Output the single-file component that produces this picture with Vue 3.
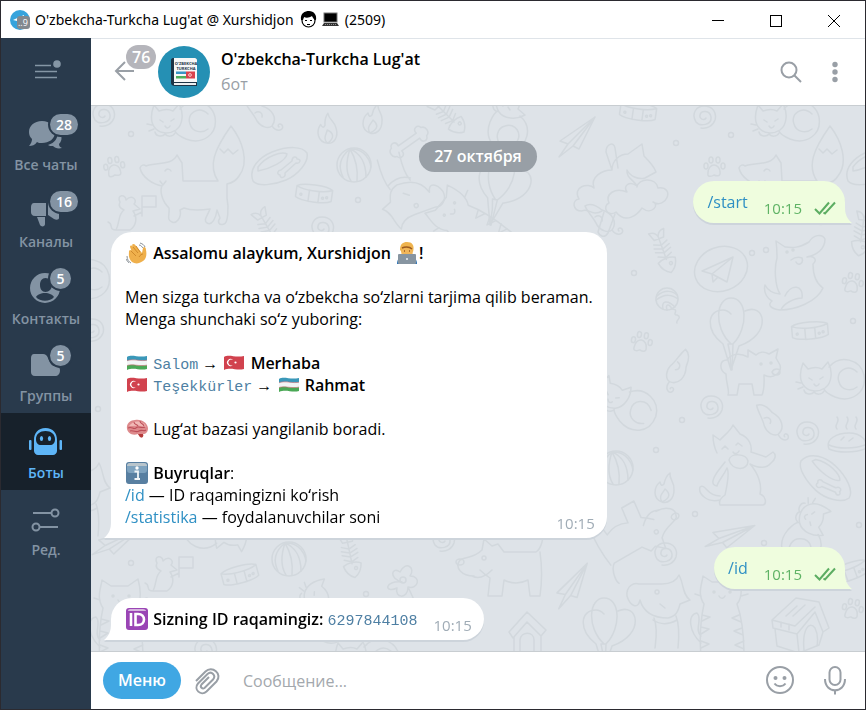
<template>
  <div class="window">
    <svg class="sprite" aria-hidden="true">
      <defs>
        <symbol id="e-wave" viewBox="0 0 22 22">
          <path d="M6 20 C2 16 3 12 3 9 C4 7 6 8 6 10 L4 5 C4 3 6 3 7 5 L6 3 C7 1 9 2 10 4 L16 11 L17 6 C18 4 20 5 20 8 C21 13 20 17 17 19 C13 22 9 22 6 20Z" fill="#efb04c" />
          <path d="M7 5 L12 11 M5 9 L10 14 M10 4 L14 10 M13 15 C14 13 16 12 17 12" fill="none" stroke="#cf8a2c" stroke-width="1" />
          <path d="M1 14 C1 18 3 20 5 21 M14 1 C17 2 18 3 19 5 M0 17 C1 19 2 20 3 21 M13 3 C15 3 16 5 17 6" fill="none" stroke="#8a9197" stroke-width="1" />
        </symbol>
        <symbol id="e-coder" viewBox="0 0 22 22">
          <path d="M1 22 C1 17 4 15 6 14 H16 C19 15 21 18 21 22Z" fill="#2b72b4" />
          <ellipse cx="11" cy="9" rx="6" ry="7" fill="#f0b65a" />
          <path d="M4 8 C4 2 7 0 11 0 C16 0 19 3 17 10 L15 7 C12 7 9 6 8 5 C7 6 6 7 6 10Z" fill="#efb44f" />
          <path d="M6 6 C8 5 13 4 16 7 M8 9 H9 M13 9 H14" fill="none" stroke="#9b5a20" stroke-width="1.4" />
          <rect x="2" y="12" width="18" height="10" rx="1" fill="#8795a1" />
          <circle cx="11" cy="17" r="1" fill="#eef2f5" />
        </symbol>
        <symbol id="e-uz" viewBox="0 0 22 22">
          <clipPath id="flag"><path d="M1 5 C6 2 12 6 21 4 V17 C14 19 8 15 1 18Z" /></clipPath>
          <g clip-path="url(#flag)">
            <rect width="22" height="22" fill="#f2f5f5" />
            <path d="M0 4 C6 1 12 5 22 3 V8 C14 10 8 6 0 9Z" fill="#3a98b9" />
            <path d="M0 14 C6 11 12 15 22 13 V20 H0Z" fill="#4aa855" />
            <path d="M0 9 C8 6 14 10 22 8 M0 14 C6 11 12 15 22 13" fill="none" stroke="#cf6a70" stroke-width=".6" />
          </g>
        </symbol>
        <symbol id="e-tr" viewBox="0 0 22 22">
          <path d="M1 5 C6 2 12 6 21 4 V17 C14 19 8 15 1 18Z" fill="#d1424e" />
          <path d="M10 8 A3.5 3.5 0 1 0 10 13 A3 3 0 1 1 10 8Z" fill="#fff" />
          <circle cx="12.5" cy="10.5" r="1.1" fill="#fff" />
        </symbol>
        <symbol id="e-brain" viewBox="0 0 22 22">
          <path d="M1 11 C0 5 5 2 9 2 C15 1 21 4 22 10 C22 14 20 16 17 16 C18 19 16 20 14 19 L12 16 C6 18 2 15 1 11Z" fill="#dd8a8c" />
          <path d="M3 8 C6 4 11 2 17 5 C20 7 20 9 19 9 C14 7 8 8 3 8Z" fill="#f1b9b6" />
          <path d="M2 10 C6 8 7 12 10 10 C12 7 15 11 19 9 M4 13 C8 12 10 15 13 13 S18 14 20 12 M8 4 C8 7 11 6 12 8 M14 3 C14 6 17 5 18 8" fill="none" stroke="#bd4f59" stroke-width="1.1" />
          <path d="M12 16 H17 C18 19 16 20 14 19Z" fill="#b53b3a" />
        </symbol>
        <symbol id="e-info" viewBox="0 0 22 22">
          <rect x="0" y="0" width="22" height="22" rx="3" fill="#587fa1" />
          <rect x="1" y="1" width="20" height="10" rx="3" fill="#7fa3bf" />
          <path d="M1 4 C1 2 2 1 4 1 H18 C20 1 21 2 21 4Z" fill="#b9c5cc" />
          <circle cx="11" cy="6" r="1.7" fill="#fff" />
          <path d="M8.5 9.5 H12 V16.5 M8.5 17 H14" fill="none" stroke="#f1f5f8" stroke-width="1.8" />
        </symbol>
        <symbol id="e-id" viewBox="0 0 22 22">
          <rect width="22" height="22" rx="3" fill="#9a45b5" />
          <path d="M2 3 C2 1 4 1 5 1 H17 C19 1 20 2 20 3Z" fill="#d6b5df" />
          <path d="M5 5 V18 M9.5 6 V17 H12 C20 17 20 6 12 6Z" fill="none" stroke="#fff" stroke-width="2.6" />
        </symbol>

        <g id="d-swirl"><path d="M2 1 C0 4 -5 2 -4 -2 C-3 -7 6 -7 7 0 C8 8 -4 10 -8 5 C-13 -3 -8 -11 0 -11 C9 -11 13 -4 11 3 C9 9 3 12 -3 11" /></g>
        <g id="d-dot"><circle r="2.5" /></g>
        <g id="d-paw">
          <path d="M-6 5 C-6 0 -3 -3 0 -3 C3 -3 6 0 6 4 C7 9 2 8 0 7 C-3 9 -7 9 -6 5Z" />
          <ellipse cx="-8" cy="-2" rx="2" ry="3" /><ellipse cx="-3" cy="-8" rx="2" ry="3" />
          <ellipse cx="4" cy="-8" rx="2" ry="3" /><ellipse cx="9" cy="-2" rx="2" ry="3" />
        </g>
        <g id="d-ball">
          <circle r="17" />
          <path d="M-4 -16 C-14 -8 -16 2 -11 12 M-4 -16 C-8 -4 -8 8 -3 16 M-4 -16 C2 -6 4 6 3 16 M-4 -16 C6 -12 12 -2 12 12 M-4 -16 C6 -17 15 -10 17 2" />
        </g>
        <g id="d-fish">
          <path d="M0 -14 V10 M-8 -20 C-4 -20 -1 -18 0 -14 C1 -18 4 -20 8 -20 L5 -12 H-5Z M-7 -8 L0 -5 L7 -8 M-8 -4 L0 -1 L8 -4 M-8 0 L0 3 L8 0 M-7 5 L0 8 L7 5 M-9 11 C-4 8 4 8 9 11 C8 17 4 22 0 24 C-4 22 -8 17 -9 11Z" />
          <circle cx="3" cy="15" r="1.5" />
        </g>
        <g id="d-bone"><path d="M-11 -3 H11 C10 -9 17 -10 18 -5 C23 -4 23 4 18 5 C17 10 10 9 11 3 H-11 C-10 9 -17 10 -18 5 C-23 4 -23 -4 -18 -5 C-17 -10 -10 -9 -11 -3Z" /></g>
        <g id="d-collar">
          <path d="M-18 -6 C-12 -10 12 -10 18 -6 V5 C12 9 -12 9 -18 5Z M-18 -6 C-10 -2 10 -2 18 -6 M-5 -3 H5 V8 H-5Z" />
          <circle cx="-13" cy="2" r="1" /><circle cx="13" cy="2" r="1" /><circle cx="9" cy="3" r="1" />
        </g>
        <g id="d-plane"><path d="M18 -20 L-17 4 L-9 7 L-18 20 L-4 9 L2 12Z M18 -20 L-9 7 M18 -20 L-4 9" /></g>
        <g id="d-badge"><ellipse rx="27" ry="22" transform="rotate(-20)" /><path d="M12 -12 L-19 2 L-9 5 L6 13Z M12 -12 L-9 5 L-8 13 L-3 8" /></g>
        <g id="d-fire"><path d="M-3 14 C-13 10 -11 -1 -5 -6 C-4 -2 -3 -2 -1 -4 C0 -9 1 -12 5 -15 C4 -8 10 -6 9 2 C9 11 3 16 -3 14Z M-3 14 C-7 8 -2 5 0 1 C5 5 6 10 -3 14" /></g>
        <g id="d-bowl">
          <path d="M-27 15 C-32 2 -20 -9 -8 -14 C8 -20 22 -20 27 -13 C29 -4 18 9 6 14 C-6 19 -22 21 -27 15Z M-22 1 C-14 -10 2 -15 7 -12 C6 -5 -10 3 -22 5Z" />
          <path d="M1 4 L12 -5 C12 -10 17 -10 17 -7 C22 -7 20 -2 16 -3 L5 7 C6 12 0 13 0 9 C-4 8 -2 4 1 4Z" />
        </g>
        <g id="d-mouse"><path d="M-15 -16 C-10 -19 -3 -16 2 -12 C12 -9 18 0 12 8 C8 11 1 9 -3 3 C-6 -4 -12 -9 -15 -16Z M12 8 C17 15 25 12 22 7 C19 4 17 8 19 9 M-5 -5 C-1 -8 3 -5 2 -1" /></g>
        <g id="d-curl">
          <path d="M-22 -12 L-17 -6 C-12 -8 -7 -8 -3 -6 L3 -13 C8 -4 7 8 0 13 C-6 17 -15 17 -20 12 C-26 6 -25 -4 -22 -12Z M4 -8 C15 -21 35 -16 39 0 C42 18 26 28 10 22 C3 19 0 17 -1 14 M32 -3 C22 -12 10 -3 14 7 C16 15 26 17 32 12 M-16 3 L-13 5 M-5 4 L-2 2 M-11 9 C-9 12 -7 11 -6 9 M-21 15 C-20 20 -13 20 -11 17 C-9 20 -3 20 -1 16 M-29 7 L-24 8 M-27 14 L-22 12" />
        </g>
        <g id="d-fox"><path d="M-44 -14 C-34 -18 -18 -14 -13 -25 L-8 -17 L-7 1 H28 C18 -14 24 -30 41 -54 C52 -40 60 -18 49 -4 C46 1 42 3 37 4 V18 C39 28 38 43 34 44 C29 46 27 42 30 38 L27 30 C26 38 22 46 17 43 C13 40 17 37 20 29 C12 30 2 31 -6 28 L-10 30 C-8 38 -14 44 -18 42 C-24 40 -20 34 -21 28 C-29 20 -30 10 -28 6 C-38 4 -48 -3 -50 -12 C-49 -15 -46 -16 -44 -14Z M30 -31 L34 -27 L38 -31 L43 -26 L48 -30 M-25 -9 C-23 -12 -20 -11 -19 -9 M-30 1 L-27 5 L-24 1" /></g>
        <g id="d-dog"><path d="M-13 -35 C-12 -28 -12 -22 -12 -18 C-15 -8 -14 10 -9 18 C-19 17 -22 13 -24 9 C-26 17 -21 23 -17 25 C-22 29 -18 33 -9 34 C6 34 28 26 34 12 C28 8 24 0 24 -12 C29 -16 25 -21 18 -19 C28 -21 36 -27 36 -37 C33 -43 24 -41 20 -34 C10 -28 4 -28 -4 -29Z M2 -16 C6 -19 10 -19 13 -18 C15 -12 9 -10 7 -14 M-4 20 C2 7 15 9 13 22 M-8 34 C-6 28 5 22 13 22" /><circle cx="-2" cy="-24" r="1" /><circle cx="4" cy="-26" r="1" /></g>
        <g id="d-cat"><path d="M-23 -25 C-26 -31 -27 -37 -27 -43 L-20 -38 C-16 -43 -10 -46 -7 -53 L0 -44 C10 -40 12 -32 11 -26 L26 -21 L33 -26 C37 -23 35 -18 31 -15 C26 -9 18 -10 10 -14 C19 -4 22 8 20 16 C26 18 27 26 23 27 H-20 C-22 22 -18 19 -15 17 C-13 8 -10 -5 -13 -10 C-17 -1 -22 3 -23 8 C-30 7 -27 0 -22 -7 L-15 -16 M-20 22 C-33 25 -42 16 -40 9 C-34 5 -34 18 -20 18 M-11 -18 C-10 -25 6 -25 8 -17 C8 -7 -8 -7 -11 -18 M-18 -29 L-15 -32 L-12 -29 M-4 -33 L-2 -35 L2 -32 M-7 -26 C-5 -23 -2 -25 -1 -27" /></g>
        <g id="d-tabby"><path d="M-22 38 C-24 15 -22 0 -19 -14 C-26 -24 -21 -34 -20 -42 L-11 -36 H6 L16 -43 C20 -28 19 -20 14 -14 C19 0 21 18 21 38 M-22 25 C-34 14 -36 -4 -26 -5 C-20 0 -29 12 -22 18 M-21 -3 L-13 -1 L-21 3 M-22 9 L-14 11 L-22 16 M-22 23 L-14 26 L-22 30 M16 -3 L9 0 L18 4 M19 10 L11 13 L20 17 M21 23 L12 27 L21 31 M-28 -24 L-22 -22 M18 -22 L25 -24 M-4 -22 C-2 -18 1 -20 2 -22" /><circle cx="-9" cy="-26" r="1" /><circle cx="7" cy="-26" r="1" /></g>
        <g id="d-cloud"><path d="M-28 29 C-38 29 -38 18 -31 17 C-38 5 -22 0 -16 6 C-20 -5 -8 -12 2 -12 L-4 -30 C-4 -38 4 -41 5 -34 L8 -14 M2 -12 C2 -22 10 -28 18 -28 L32 -38 L34 -26 C39 -21 44 -16 46 -10 L35 -4 C28 -2 20 -6 17 -12 C16 -4 24 -2 27 4 C19 -2 13 4 17 10 C5 5 -5 12 -1 21 C-8 24 -3 36 6 30 C16 43 28 32 32 26 C42 34 50 22 43 20 C56 28 66 4 48 6 C46 -5 28 -4 27 5 M-8 29 C-18 35 -22 25 -28 29 M-6 30 L-12 50 M5 32 L-2 51 C-5 56 -10 55 -12 50" /></g>
        <g id="d-balloons"><path d="M-8 22 C-26 8 -24 -12 -8 -12 C-5 -12 -2 -10 0 -8 M-8 22 L0 48 M0 22 C-18 5 -15 -24 0 -24 C16 -24 18 5 2 22 M2 22 H-3 L-1 32 L0 48 L8 24 M14 -11 C34 -20 42 12 8 24 M2 22 L1 48" /></g>
        <g id="d-bear"><path d="M-17 -8 C-25 -8 -25 2 -18 6 C-18 16 -14 23 -16 27 H-7 L-5 16 H8 L10 27 H18 C21 20 20 12 20 7 C30 12 38 4 36 -3 L32 -10 L34 -19 L25 -14 C20 -17 15 -16 12 -13 L4 -18 V-11 C-5 -16 -13 -14 -17 -8Z M28 4 C30 0 36 0 36 4 C36 8 29 8 28 4" /><circle cx="17" cy="-4" r="1" /><circle cx="27" cy="-5" r="1" /></g>
        <g id="d-yarn"><circle r="11" /><path d="M-10 -3 C-2 -10 6 -8 10 -4 M-11 1 C-2 -6 6 -4 11 0 M-4 10 C-6 2 0 0 8 8 M0 11 C-2 5 2 4 5 10 M4 10 C14 10 4 16 10 16 C16 18 8 22 10 24" /></g>
        <g id="d-pie"><path d="M-18 12 C-22 2 -10 -4 2 -4 C14 -4 22 4 18 12 C8 16 -10 16 -18 12Z M-18 8 C-10 12 8 12 18 8 M-10 -8 C-14 -12 -6 -15 -10 -20 M0 -8 C-4 -12 4 -15 0 -20 M9 -8 C5 -12 13 -15 9 -20 M-6 3 L-3 0 M2 4 L6 1" /></g>
        <g id="d-house"><path d="M-29 0 L-5 -22 L18 -18 L28 8 L22 12 L14 -8 L-4 14 L-28 8Z M-29 0 L-6 6 L14 -13 M-26 9 L-24 26 L-2 33 L-4 14 M22 12 L18 25 L-2 33 M3 30 C1 10 8 0 14 8 C17 14 17 20 16 26 M-20 2 V7 M-12 4 V10 M-15 -4 L-4 -14 M-8 -4 L4 -15" /></g>
        <g id="d-booth"><path d="M-18 -2 L0 -22 L19 -4 L14 2 L0 -12 L-14 4Z M-13 3 V24 H14 V2 M-7 24 V6 C-6 -3 7 -3 7 6 V24" /></g>
        <g id="d-head"><path d="M-30 8 C-32 18 -40 14 -43 4 C-44 -6 -36 -10 -31 -8 L-8 -8 C0 -8 6 -10 9 -17 C14 -8 12 2 20 8 L10 12 C8 20 6 24 -2 26 C-14 26 -26 22 -30 8Z M-16 26 C-12 36 -14 48 -15 56 M6 24 C10 34 9 46 8 56 M-17 28 C-8 34 0 32 7 28 M-10 12 L-5 16" /><circle cx="-13" cy="0" r="2" /></g>
        <g id="d-hound"><path d="M-30 10 C-42 10 -50 2 -44 -6 C-36 -10 -30 -8 -22 -16 L-20 -27 L-12 -20 L-6 -22 L0 -14 H32 C38 -18 40 -30 38 -34 M36 -14 C38 0 38 16 36 30 H26 L24 14 C16 18 8 18 0 14 L-2 30 H-16 L-14 12 C-20 8 -22 6 -24 4 M-32 10 C-24 14 -16 8 -12 4" /><circle cx="-20" cy="-8" r="2" /><ellipse cx="-44" cy="-4" rx="4" ry="3" /></g>
        <g id="d-rat"><path d="M-10 -10 C-14 -18 -4 -18 -4 -12 C2 -18 8 -12 4 -8 L10 -3 L3 -1 C8 6 6 14 0 18 H-14 C-10 10 -12 2 -6 -2 C-10 -4 -12 -6 -10 -10Z M4 4 L12 0 M12 -16 V4 M12 -16 H26 V-5 H12 M-14 18 C-22 18 -16 12 -22 10" /></g>
        <g id="d-flower"><path d="M0 0 C-14 -4 -10 -16 -2 -10 C4 -22 14 -14 8 -6 C20 -6 16 8 6 5 C6 18 -8 16 -5 6 C-18 12 -18 -2 0 0Z M6 5 L14 22" /><circle cx="1" cy="-2" r="3" /></g>
      </defs>
    </svg>

    <header class="titlebar">
      <svg class="app-icon" viewBox="0 0 20 20" aria-hidden="true">
        <circle cx="10" cy="10" r="10" fill="#36a3dc" />
        <path d="M3 10 L14 5 V9 L7 11Z" fill="#fff" />
        <rect x="7" y="6" width="13" height="13" rx="3" fill="#82898f" />
        <text x="8" y="16" font-size="9" fill="#fff">..9</text>
      </svg>
      <h1 class="window-title">
        O'zbekcha-Turkcha Lug'at @ Xurshidjon
        <svg class="title-emoji" viewBox="0 0 17 17" aria-hidden="true">
          <circle cx="8.5" cy="9.5" r="6.5" fill="#fff" stroke="#000" stroke-width="1.2" />
          <path d="M1 9 C0 2 5 0 9 0 C14 0 17 4 16 9 C14 9 13 7 12 5 C9 7 6 7 4 6 L3 9Z" fill="#000" />
          <path d="M5 9.500 H7 M10 9.500 H12 M7 13.500 H10" stroke="#000" stroke-width="1.2" />
        </svg>
        <svg class="title-emoji" viewBox="0 0 17 17" aria-hidden="true">
          <rect x="2" y="2" width="13" height="9" fill="#000" stroke="#777" />
          <path d="M2 12 H15 L17 15 H0Z" fill="#333" />
          <path d="M3 13.500 H14" stroke="#aaa" stroke-width=".8" stroke-dasharray="1 1" />
        </svg>
        (2509)
      </h1>
      <div class="window-controls">
        <button type="button" aria-label="Свернуть"><svg viewBox="0 0 12 12"><path d="M0 5.500 H12" /></svg></button>
        <button type="button" aria-label="Развернуть"><svg viewBox="0 0 12 12"><rect x=".5" y=".5" width="11" height="11" /></svg></button>
        <button type="button" aria-label="Закрыть"><svg viewBox="0 0 12 12"><path d="M0 0 L12 12 M12 0 L0 12" /></svg></button>
      </div>
    </header>

    <div class="body">
      <nav class="sidebar">
        <button type="button" class="burger" aria-label="Меню">
          <svg viewBox="0 0 28 20">
            <path d="M3 3.500 H19 M3 9.500 H25 M3 15.500 H25" fill="none" stroke="#8596a5" stroke-width="1.6" />
            <circle cx="25" cy="2" r="3.8" fill="#8596a5" />
          </svg>
        </button>
        <button
          v-for="folder in folders"
          :key="folder.icon"
          type="button"
          class="folder"
          :class="{ active: folder.icon === activeFolder }"
          @click="activeFolder = folder.icon"
        >
          <svg class="folder-icon" viewBox="0 0 32 32" aria-hidden="true">
            <g v-if="folder.icon === 'chats'">
              <path d="M12 2 C20 2 25 7 25 13 C25 20 19 24 12 24 C10 24 8 24 7 23 C5 26 2 27 -1 27 C1 25 2 22 2 20 C0 18 -1 16 -1 13 C-1 7 4 2 12 2Z" />
              <path d="M28 12 C32 16 33 21 29 25 C29 27 30 28 32 29 C28 30 25 29 23 27 C21 27 19 27 18 26 C25 24 28 19 28 12Z" />
            </g>
            <g v-else-if="folder.icon === 'channels'">
              <path d="M4 7 H16 V20 H5 C2 20 1 18 1 16 V11 C1 9 2 7 4 7Z" />
              <path d="M7 21 H15 V28 C15 31 11 31 10 29Z" />
              <path d="M18 7 L26 2 H29 V22 C29 24 26 24 24 23 L18 19Z" />
            </g>
            <path
              v-else-if="folder.icon === 'contacts'"
              fill-rule="evenodd"
              d="M15 0 A15 15 0 1 0 15 30 A15 15 0 1 0 15 0Z M15.500 5 C19 5 22 8 22 12 C22 16 19 19 15.500 19 C12 19 10 16 10 12 C10 8 12 5 15.500 5Z M15 20 C19 20 23 22 24 24 C20 29 10 29 6 24 C7 22 11 20 15 20Z"
            />
            <path v-else-if="folder.icon === 'groups'" d="M4 4 H13 C18 4 18 10 21 14 C24 18 30 15 30 20 C30 24 28 26 25 26 H5 C2 26 1 24 1 22 V8 C1 6 2 4 4 4Z" />
            <g v-else-if="folder.icon === 'bots'">
              <path fill-rule="evenodd" d="M15.500 1 C23 1 27 6 27 13 V24 C27 26 25 28 23 28 H8 C6 28 4 26 4 24 V13 C4 6 8 1 15.500 1Z M15.500 4 C10 4 6 7 6 12 C6 16 8 18 11 18 H20 C23 18 25 16 25 12 C25 7 21 4 15.500 4Z" />
              <rect x="-1" y="13" width="2.5" height="10" rx="1" /><rect x="29.5" y="13" width="2.5" height="10" rx="1" />
              <ellipse cx="11.5" cy="11.5" rx="1.6" ry="2.6" /><ellipse cx="19.5" cy="11.5" rx="1.6" ry="2.6" />
            </g>
            <g v-else class="outline">
              <path d="M3 9 H21 M10 23 H28" />
              <circle cx="25" cy="9" r="3.5" /><circle cx="6" cy="23" r="3.5" />
            </g>
          </svg>
          <span v-if="folder.count" class="folder-badge">{{ folder.count }}</span>
          <span class="folder-label">{{ folder.label }}</span>
        </button>
      </nav>

      <main class="main">
        <header class="chat-header">
          <button type="button" class="back" aria-label="Назад">
            <svg viewBox="0 0 20 20"><path d="M19 9 H1 M10 0 L1 9 L10 18" /></svg>
            <span class="back-badge">76</span>
          </button>
          <svg class="avatar" viewBox="0 0 52 52" aria-hidden="true">
            <circle cx="26" cy="26" r="26" fill="#2590b4" />
            <path d="M15 12 H37 C38 12 39 13 39 14 V40 H17 C15 40 13 39 13 37 V14 C13 13 14 12 15 12Z" fill="#1d3446" />
            <path d="M16 12 H37 C38 12 39 13 39 14 V36 H16Z" fill="#f7f8f8" />
            <path d="M16 37 H38 V39 H16Z" fill="#eceff0" />
            <text x="28" y="19" text-anchor="middle" class="cover">O'ZBEKCHA</text>
            <text x="28" y="24" text-anchor="middle" class="cover">TURKCHA</text>
            <rect x="18" y="25.5" width="10" height="2.5" fill="#3995c4" />
            <rect x="18" y="30" width="10" height="2.5" fill="#4fae5b" />
            <rect x="28" y="25.5" width="9" height="7" fill="#d8434d" />
            <circle cx="32" cy="29" r="1.4" fill="none" stroke="#fff" stroke-width=".7" />
          </svg>
          <div class="peer">
            <h2>O'zbekcha-Turkcha Lug'at</h2>
            <p>бот</p>
          </div>
          <button type="button" class="header-btn" aria-label="Поиск">
            <svg viewBox="0 0 24 24"><circle cx="10" cy="10" r="7.5" /><path d="M15.500 15.500 L22 22" /></svg>
          </button>
          <button type="button" class="header-btn dots" aria-label="Ещё">
            <svg viewBox="0 0 24 24"><circle cx="12" cy="4.5" r="2.7" /><circle cx="12" cy="12" r="2.7" /><circle cx="12" cy="19.5" r="2.7" /></svg>
          </button>
        </header>

        <section class="chat">
          <svg class="wallpaper" viewBox="91 106 774 545" preserveAspectRatio="xMinYMin slice" aria-hidden="true">
            <use
              v-for="(d, i) in doodles"
              :key="i"
              :href="'#d-' + d[0]"
              :transform="`translate(${d[1]} ${d[2]}) rotate(${d[3] || 0})`"
            />
          </svg>

          <time class="date">27 октября</time>
          <article
            v-for="message in messages"
            :key="message.id"
            class="bubble"
            :class="message.out ? 'out' : 'in'"
          >
            <p v-for="(line, i) in message.lines" :key="i" class="line">
              <span class="line-text">
                <template v-for="(part, j) in line" :key="j">
                  <svg v-if="part.emoji" class="emoji" aria-hidden="true"><use :href="'#e-' + part.emoji" /></svg>
                  <a v-else-if="part.link" href="#" @click.prevent="draft = part.link">{{ part.link }}</a>
                  <code v-else-if="part.code">{{ part.code }}</code>
                  <b v-else-if="part.bold">{{ part.bold }}</b>
                  <template v-else>{{ part.text }}</template>
                </template>
              </span>
              <span v-if="i === message.lines.length - 1" class="meta">
                <time>10:15</time>
                <svg v-if="message.out" viewBox="0 0 22 14" aria-label="Прочитано">
                  <path d="M1 8 L5.500 12.500 L15 1.500 M9.500 11.500 L11 12.500 L21 1.500" />
                </svg>
              </span>
            </p>
          </article>
        </section>

        <form class="composer" @submit.prevent="draft = ''">
          <button type="button" class="menu-btn">Меню</button>
          <button type="button" class="tool" aria-label="Прикрепить">
            <svg viewBox="0 0 28 28">
              <path d="M2 14 L11.500 4.500 C18 -2 29 7 22.500 14.500 L12.500 24.500 C7 29.500 -1 22.500 4 16.500 L13.500 7 C17.500 3.500 22.500 8.500 19 12.500 L10.500 21 C8.500 22.500 5.500 20 7.500 17.500 L15 10" />
            </svg>
          </button>
          <input v-model="draft" class="message-input" type="text" placeholder="Сообщение..." aria-label="Сообщение" />
          <button type="button" class="tool wide" aria-label="Эмодзи">
            <svg viewBox="0 0 28 28">
              <circle cx="14" cy="13" r="13" />
              <path d="M8.500 16.500 C11 20 17 20 19.500 16.500" />
              <circle class="eye" cx="9.5" cy="11" r="2" /><circle class="eye" cx="18.5" cy="11" r="2" />
            </svg>
          </button>
          <button type="button" class="tool wide" aria-label="Голосовое сообщение">
            <svg viewBox="0 0 28 28">
              <rect x="8.5" y="0" width="11" height="18" rx="5.5" />
              <path d="M4 12 C4 27 24 27 24 12 M14 23 V27.500" />
            </svg>
          </button>
        </form>
      </main>
    </div>
  </div>
</template>

<script setup>
import { ref } from 'vue';

const activeFolder = ref('bots');
const draft = ref('');

const folders = [
  { icon: 'chats', label: 'Все чаты', count: 28 },
  { icon: 'channels', label: 'Каналы', count: 16 },
  { icon: 'contacts', label: 'Контакты', count: 5 },
  { icon: 'groups', label: 'Группы', count: 5 },
  { icon: 'bots', label: 'Боты' },
  { icon: 'edit', label: 'Ред.' },
];

const messages = [
  { id: 1, out: true, lines: [[{ link: '/start' }]] },
  {
    id: 2,
    out: false,
    lines: [
      [{ emoji: 'wave' }, { bold: ' Assalomu alaykum, Xurshidjon ' }, { emoji: 'coder' }, { bold: '!' }],
      [],
      [{ text: 'Men sizga turkcha va oʻzbekcha soʻzlarni tarjima qilib beraman.' }],
      [{ text: 'Menga shunchaki soʻz yuboring:' }],
      [],
      [{ emoji: 'uz' }, { text: ' ' }, { code: 'Salom' }, { text: ' → ' }, { emoji: 'tr' }, { bold: ' Merhaba' }],
      [{ emoji: 'tr' }, { text: ' ' }, { code: 'Teşekkürler' }, { text: ' → ' }, { emoji: 'uz' }, { bold: ' Rahmat' }],
      [],
      [{ emoji: 'brain' }, { text: ' Lugʻat bazasi yangilanib boradi.' }],
      [],
      [{ emoji: 'info' }, { bold: ' Buyruqlar' }, { text: ':' }],
      [{ link: '/id' }, { text: ' — ID raqamingizni koʻrish' }],
      [{ link: '/statistika' }, { text: ' — foydalanuvchilar soni' }],
    ],
  },
  { id: 3, out: true, lines: [[{ link: '/id' }]] },
  {
    id: 4,
    out: false,
    lines: [[{ emoji: 'id' }, { bold: ' Sizning ID raqamingiz: ' }, { code: '6297844108' }]],
  },
];

// [рисунок, x, y, поворот]
const doodles = [
  ['swirl', 103, 115], ['curl', 176, 117], ['dot', 131, 134], ['paw', 114, 168, -8],
  ['fox', 190, 180], ['bowl', 280, 166], ['mouse', 260, 118], ['fire', 327, 129, -15],
  ['fire', 373, 119], ['ball', 354, 165], ['bone', 409, 142, -35], ['collar', 314, 194, 8],
  ['dot', 358, 200], ['fish', 268, 228, -30], ['swirl', 322, 228], ['head', 404, 210, 160],
  ['rat', 130, 212], ['fish', 447, 115, -45], ['curl', 512, 112, 90], ['plane', 577, 137],
  ['collar', 638, 112, 8], ['swirl', 704, 117], ['dot', 676, 143], ['dot', 731, 135],
  ['curl', 780, 117], ['paw', 714, 168], ['fox', 789, 180], ['cloud', 610, 182],
  ['balloons', 500, 178, 12], ['tabby', 470, 225, -50], ['bowl', 875, 166], ['mouse', 600, 222],
  ['fish', 663, 250, -20], ['badge', 721, 269], ['dog', 789, 276], ['paw', 852, 284, 10],
  ['dot', 752, 253], ['dot', 766, 250], ['yarn', 667, 299], ['balloons', 731, 322],
  ['bear', 744, 368], ['collar', 810, 331, -5], ['paw', 641, 343, 10], ['dot', 853, 321],
  ['dot', 634, 273], ['mouse', 674, 368, 75], ['curl', 825, 375], ['fish', 862, 232, 8],
  ['curl', 622, 397, 30], ['swirl', 711, 407], ['mouse', 768, 424, 12], ['dot', 682, 420],
  ['dot', 656, 450], ['cat', 740, 478], ['ball', 616, 468], ['fire', 665, 488],
  ['swirl', 807, 433], ['pie', 847, 437], ['bowl', 826, 479, 65], ['dot', 695, 514],
  ['hound', 635, 535, 150], ['plane', 730, 536, 25], ['curl', 812, 528, 110], ['swirl', 665, 554],
  ['head', 670, 592], ['tabby', 723, 618], ['house', 801, 620], ['paw', 852, 610, 10],
  ['balloons', 604, 622], ['collar', 850, 572, -20], ['dot', 764, 543], ['dot', 859, 525],
  ['hound', 504, 566], ['plane', 573, 586, -10], ['booth', 527, 634], ['flower', 402, 582],
  ['fish', 350, 554, -12], ['ball', 289, 559], ['collar', 240, 575, -15], ['rat', 167, 573],
  ['curl', 222, 536, 190], ['swirl', 443, 540], ['dot', 131, 563], ['dot', 366, 594],
  ['tabby', 122, 622], ['curl', 325, 604, 60], ['plane', 116, 542, 20], ['dot', 98, 409],
  ['swirl', 92, 330], ['curl', 70, 275], ['head', 90, 480], ['curl', 360, 655],
  ['swirl', 205, 650], ['dot', 596, 250],
];
</script>

<style>
body {
  margin: 0;
}
</style>

<style scoped>
.window {
  box-sizing: border-box;
  min-height: 100vh;
  display: flex;
  flex-direction: column;
  border: 1px solid #2b2a30;
  background: #fff;
  color: #000;
  font-family: "Open Sans", "Noto Sans", sans-serif;
  font-size: 16px;
  line-height: 22px;
}

.sprite {
  position: absolute;
  width: 0;
  height: 0;
}

button {
  padding: 0;
  border: none;
  background: transparent;
  font-family: inherit;
  cursor: pointer;
}

h1,
h2,
p {
  margin: 0;
  font-weight: 400;
}

/* заголовок окна */
.titlebar {
  height: 37px;
  display: flex;
  align-items: center;
  padding: 0 2px 0 9px;
}

.app-icon {
  width: 20px;
  height: 20px;
  margin-right: 5px;
}

.window-title {
  flex: 1;
  font-family: "Noto Sans", sans-serif;
  font-size: 14px;
  white-space: nowrap;
}

.title-emoji {
  width: 17px;
  height: 17px;
  margin: 0 2px 0 3px;
  vertical-align: -3px;
}

.window-controls {
  display: flex;
}

.window-controls button {
  width: 58px;
  height: 36px;
}

.window-controls svg {
  width: 12px;
  height: 12px;
  fill: none;
  stroke: #000;
  vertical-align: middle;
}

.body {
  flex: 1;
  display: flex;
}

/* папки */
.sidebar {
  width: 90px;
  flex-shrink: 0;
  display: flex;
  flex-direction: column;
  background: #293a4c;
}

.burger {
  height: 67px;
}

.burger svg {
  width: 28px;
  height: 20px;
  overflow: visible;
  vertical-align: middle;
}

.folder {
  position: relative;
  height: 77px;
  display: flex;
  flex-direction: column;
  align-items: center;
  gap: 4px;
  padding-top: 14px;
  color: #8393a3;
}

.folder.active {
  background: #17212b;
  color: #5eb5f7;
}

.folder-icon {
  width: 32px;
  height: 32px;
  overflow: visible;
  fill: currentColor;
}

.outline {
  fill: none;
  stroke: currentColor;
  stroke-width: 2;
}

.folder-badge {
  position: absolute;
  top: 9px;
  left: 49px;
  min-width: 9px;
  padding: 0 6px;
  border-radius: 11px;
  background: #8393a3;
  box-shadow: 0 0 0 2px #293a4c;
  color: #fff;
  font-size: 14px;
  font-weight: 600;
  line-height: 21px;
}

.folder-label {
  font-size: 14px;
  font-weight: 600;
  line-height: 20px;
}

/* шапка чата */
.main {
  flex: 1;
  min-width: 0;
  display: flex;
  flex-direction: column;
  border-top: 1px solid #dfe4e9;
}

.chat-header {
  height: 66px;
  display: flex;
  align-items: center;
  border-bottom: 1px solid #c8cdd1;
}

.back {
  position: relative;
  width: 67px;
  height: 66px;
  padding-left: 24px;
  text-align: left;
}

.back svg {
  width: 20px;
  height: 20px;
  overflow: visible;
  fill: none;
  stroke: #999fa6;
  stroke-width: 2;
  vertical-align: middle;
}

.back-badge {
  position: absolute;
  top: 6px;
  left: 35px;
  padding: 0 6px;
  border-radius: 12px;
  background: #b5b5bb;
  color: #fff;
  font-size: 16px;
  font-weight: 600;
  line-height: 24px;
}

.avatar {
  width: 52px;
  height: 52px;
}

.cover {
  font-size: 4px;
  font-weight: 700;
  fill: #1d3446;
}

.peer {
  flex: 1;
  padding-left: 11px;
}

.peer h2 {
  font-size: 16px;
  font-weight: 600;
  line-height: 25px;
}

.peer p {
  color: #999fa6;
  line-height: 25px;
}

.header-btn {
  width: 44px;
  height: 44px;
}

.header-btn svg {
  width: 24px;
  height: 24px;
  fill: none;
  stroke: #999fa6;
  stroke-width: 2;
  vertical-align: middle;
}

.header-btn.dots {
  margin-right: 8px;
}

.dots svg {
  fill: #999fa6;
  stroke: none;
}

/* сообщения */
.chat {
  position: relative;
  flex: 1;
  display: flex;
  flex-direction: column;
  justify-content: flex-end;
  align-items: flex-start;
  gap: 9px;
  padding: 11px 20px;
  background: #dee3e8;
  overflow: hidden;
}

.wallpaper {
  position: absolute;
  inset: 0;
  width: 100%;
  height: 100%;
  fill: none;
  stroke: #d2d8dd;
  stroke-width: 1.5;
  stroke-linejoin: round;
  stroke-linecap: round;
}

.date {
  position: relative;
  align-self: center;
  padding: 0 15px;
  border-radius: 16px;
  background: #989fa6;
  color: #fff;
  font-weight: 600;
  line-height: 31px;
}

.bubble {
  position: relative;
  padding: 10px 14px;
  border-radius: 21px;
  background: #fff;
  filter: drop-shadow(0 2px 0 #cdd4db);
}

.bubble::after {
  content: "";
  position: absolute;
  bottom: 0;
  width: 8px;
  height: 16px;
  background: inherit;
}

.bubble.in {
  border-bottom-left-radius: 0;
}

.bubble.in::after {
  left: -7px;
  clip-path: path("M8 0 H7 C7 7 5 12 0 16 H8Z");
}

.bubble.out {
  align-self: flex-end;
  padding-right: 9px;
  border-bottom-right-radius: 0;
  background: #effdde;
}

.bubble.out::after {
  right: -7px;
  clip-path: path("M0 0 H1 C1 7 3 12 8 16 H0Z");
}

.line {
  min-height: 22px;
  display: flex;
  justify-content: space-between;
  align-items: flex-end;
}

.line-text {
  white-space: pre-wrap;
}

.line a {
  color: #2f90c4;
  text-decoration: none;
}

.line b {
  font-weight: 600;
}

.line code {
  color: #4e7fa3;
  font-family: "Liberation Mono", monospace;
  font-size: 15px;
  line-height: 16px;
}

.emoji {
  width: 22px;
  height: 22px;
  margin: 0 1px;
  vertical-align: bottom;
}

.meta {
  display: flex;
  align-items: center;
  gap: 12px;
  margin: 0 -2px -5px 16px;
  color: #a0acb6;
  font-size: 15px;
  line-height: 20px;
}

.out .meta {
  margin-right: 0;
  color: #5fb365;
}

.meta svg {
  width: 22px;
  height: 14px;
  fill: none;
  stroke: #5cad62;
  stroke-width: 2;
}

/* поле ввода */
.composer {
  height: 57px;
  display: flex;
  align-items: center;
  padding: 0 3px 0 12px;
  border-top: 1px solid #c8cdd1;
}

.menu-btn {
  padding: 0 15px;
  border-radius: 19px;
  background: #40a7e3;
  color: #fff;
  font-size: 16px;
  font-weight: 600;
  line-height: 37px;
}

.tool {
  width: 54px;
  height: 54px;
}

.tool.wide {
  width: 55px;
}

.tool svg {
  width: 28px;
  height: 28px;
  overflow: visible;
  fill: none;
  stroke: #999fa6;
  stroke-width: 2;
  vertical-align: middle;
}

.tool .eye {
  fill: #999fa6;
  stroke: none;
}

.message-input {
  flex: 1;
  min-width: 0;
  padding: 0 8px;
  border: none;
  outline: none;
  background: transparent;
  color: #000;
  font-family: inherit;
  font-size: 16px;
  line-height: 22px;
}

.message-input::placeholder {
  color: #a3a8ad;
}
</style>
